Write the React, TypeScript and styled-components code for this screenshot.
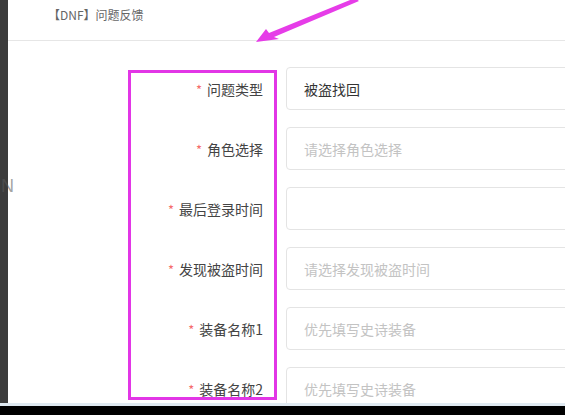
import React from "react";
import styled, { createGlobalStyle } from "styled-components";

const Global = createGlobalStyle`
  html, body { margin: 0; padding: 0; background: #fff; }
  body { font-family: "Noto Sans CJK SC", "Noto Sans", sans-serif; }
  * { box-sizing: border-box; }
`;

const Page = styled.div`
  position: relative;
  width: 565px;
  height: 415px;
  display: flex;
  flex-direction: column;
  overflow: hidden;
  background: #fff;
`;

const Body = styled.div`
  flex: 1;
  display: flex;
  min-height: 0;
`;

const SideStrip = styled.div`
  width: 8px;
  flex: none;
  background: #3c3c3c;
`;

const Content = styled.div`
  flex: 1;
  min-width: 0;
  overflow: hidden;
  display: flex;
  flex-direction: column;
`;

const Header = styled.div`
  height: 41px;
  flex: none;
  border-bottom: 1px solid #e6e6e6;
  display: flex;
  align-items: flex-start;
  padding: 7px 0 0 40px;
  font-size: 12px;
  line-height: 16px;
  color: #666;
`;

const Form = styled.div`
  padding-top: 26px;
  display: flex;
  flex-direction: column;
  gap: 17px;
`;

const Row = styled.div`
  display: grid;
  grid-template-columns: 255px 330px;
  column-gap: 23px;
  align-items: center;
`;

const Label = styled.label`
  display: flex;
  justify-content: flex-end;
  align-items: center;
  gap: 5px;
  font-size: 14px;
  color: #444;
  white-space: nowrap;
`;

const Star = styled.span`
  color: #f56c6c;
  font-size: 13px;
  line-height: 1;
  margin-top: 2px;
`;

const Field = styled.input`
  height: 43px;
  width: 100%;
  border: 1px solid #e4e4e4;
  border-radius: 4px;
  padding: 0 17px;
  font-family: inherit;
  font-size: 14px;
  color: #333;
  background: #fff;
  outline: none;
  &::placeholder { color: #c3c3c3; }
`;

const BottomBar = styled.div`
  height: 12px;
  flex: none;
  border-top: 3px solid #dfe9f1;
  background: #000;
`;

const Annotation = styled.div`
  position: absolute;
  left: 128px;
  top: 70px;
  width: 149px;
  height: 330px;
  border: 3px solid #e236e6;
  pointer-events: none;
`;

const ArrowLayer = styled.svg`
  position: absolute;
  left: 0;
  top: 0;
  pointer-events: none;
`;

const GhostLetter = styled.span`
  position: absolute;
  left: 1px;
  top: 176px;
  font-family: "Liberation Sans", sans-serif;
  font-size: 18px;
  color: #5a5a5a;
  opacity: 0.55;
  pointer-events: none;
`;

const rows: { label: string; value?: string; placeholder?: string }[] = [
  { label: "问题类型", value: "被盗找回" },
  { label: "角色选择", placeholder: "请选择角色选择" },
  { label: "最后登录时间" },
  { label: "发现被盗时间", placeholder: "请选择发现被盗时间" },
  { label: "装备名称1", placeholder: "优先填写史诗装备" },
  { label: "装备名称2", placeholder: "优先填写史诗装备" },
];

export default function App() {
  return (
    <Page>
      <Global />
      <Body>
        <SideStrip />
        <Content>
          <Header>【DNF】问题反馈</Header>
          <Form>
            {rows.map((r) => (
              <Row key={r.label}>
                <Label>
                  <Star>*</Star>
                  {r.label}
                </Label>
                <Field
                  readOnly
                  defaultValue={r.value}
                  placeholder={r.placeholder}
                />
              </Row>
            ))}
          </Form>
        </Content>
      </Body>
      <BottomBar />
      <GhostLetter>N</GhostLetter>
      <Annotation />
      <ArrowLayer width="565" height="415" viewBox="0 0 565 415">
        <polygon
          points="256,42 266,29 269,33 355,-2 359,1 274,37 279,39"
          fill="#e63ce8"
        />
      </ArrowLayer>
    </Page>
  );
}
